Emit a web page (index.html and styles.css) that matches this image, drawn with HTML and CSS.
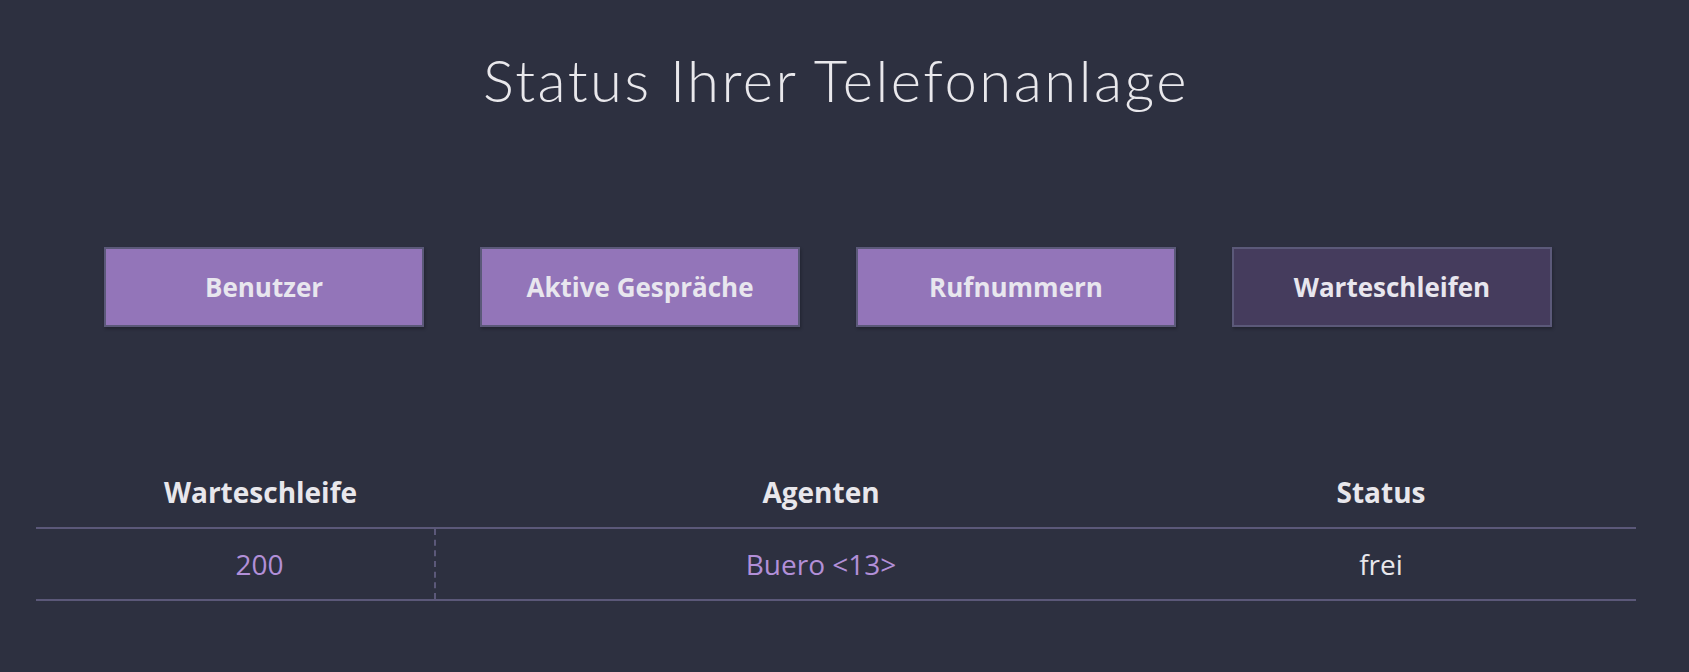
FILE: index.html
```html
<!DOCTYPE html>
<html lang="de">
<head>
<meta charset="utf-8">
<title>Status Ihrer Telefonanlage</title>
<link rel="stylesheet" href="styles.css">
</head>
<body>
<div class="page">
  <h1 class="title">Status Ihrer Telefonanlage</h1>
  <nav class="tabs">
    <a class="tab" href="#">Benutzer</a>
    <a class="tab" href="#">Aktive Gespräche</a>
    <a class="tab" href="#">Rufnummern</a>
    <a class="tab tab-active" href="#">Warteschleifen</a>
  </nav>
  <div class="table">
    <div class="row head">
      <div class="cell c1">Warteschleife</div>
      <div class="cell c2">Agenten</div>
      <div class="cell c3">Status</div>
    </div>
    <div class="row body">
      <div class="cell c1 link">200</div>
      <div class="cell c2 link">Buero &lt;13&gt;</div>
      <div class="cell c3">frei</div>
    </div>
  </div>
</div>
</body>
</html>
```
FILE: styles.css
```css
html, body {
  margin: 0;
  padding: 0;
  background: #2d3040;
}
body {
  font-family: "Open Sans", "Liberation Sans", sans-serif;
  color: #e8e7ec;
}
.page {
  width: 1672px;
  min-height: 672px;
}
.title {
  margin: 0;
  padding-top: 45px;
  font-family: "Lato", "Open Sans", sans-serif;
  font-weight: 300;
  font-size: 58px;
  letter-spacing: 2.5px;
  line-height: 1.2;
  text-align: center;
  color: #e9e8ec;
}
.tabs {
  display: flex;
  gap: 56px;
  padding-left: 104px;
  margin-top: 132px;
}
.tab {
  box-sizing: border-box;
  width: 320px;
  height: 80px;
  display: flex;
  align-items: center;
  justify-content: center;
  background: #9375b9;
  border: 2px solid #5b5979;
  color: #e8e6ee;
  font-weight: 700;
  font-size: 26px;
  text-decoration: none;
  box-shadow: 1px 2px 3px rgba(0, 0, 0, 0.25);
}
.tab-active {
  background: #453c5d;
}
.table {
  width: 1600px;
  margin: 145px auto 0;
}
.row {
  display: grid;
  grid-template-columns: 400px 770px 430px;
}
.head {
  border-bottom: 2px solid #5b5879;
}
.body {
  border-bottom: 2px solid #5b5879;
}
.cell {
  text-align: center;
  line-height: 40px;
}
.head .cell {
  font-weight: 700;
  font-size: 28px;
  padding-bottom: 15px;
}
.body .cell {
  font-size: 28px;
  padding-top: 15px;
  padding-bottom: 15px;
}
.cell.c1 {
  padding-left: 49px;
}
.cell.c3 {
  padding-right: 80px;
}
.body .c1 {
  border-right: 2px dashed #5b5879;
}
.link {
  color: #b28fd8;
}
```
